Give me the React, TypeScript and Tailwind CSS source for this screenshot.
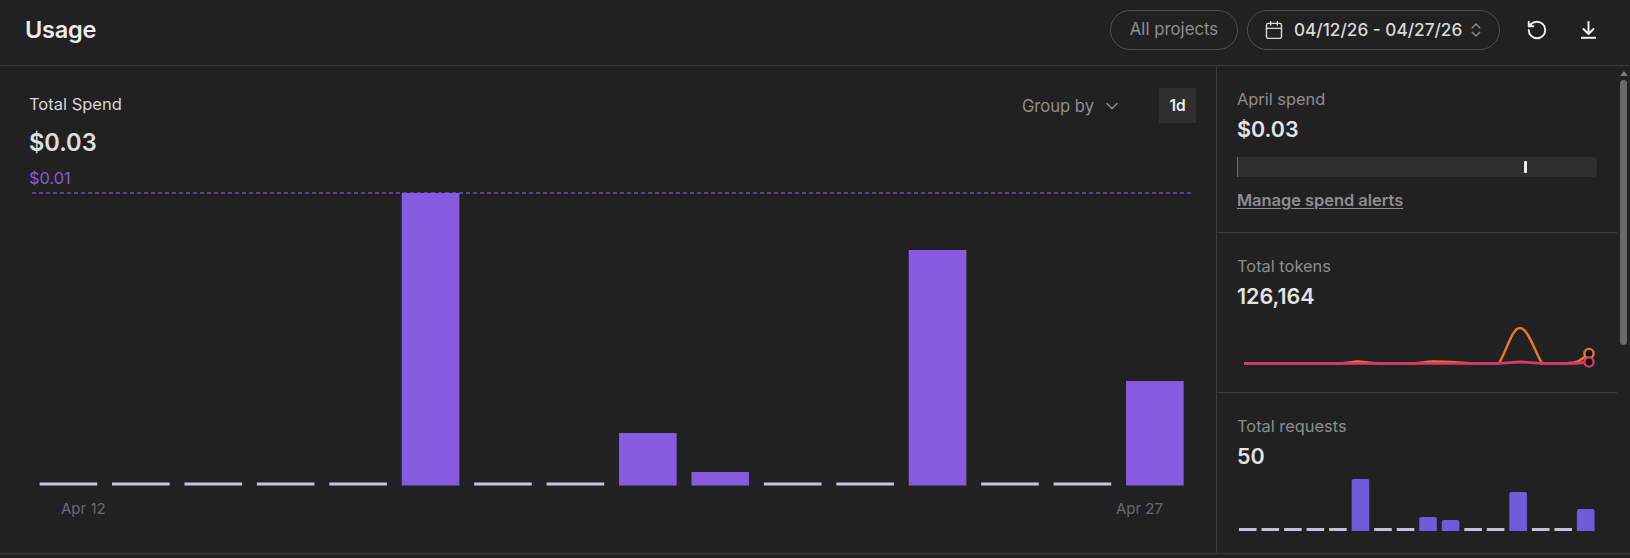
import { Calendar, ChevronDown, ChevronsUpDown, RotateCcw } from "lucide-react";

const mainBars: [number, number][] = [
  [0, 3], [1, 3], [2, 3], [3, 3], [4, 3], [5, 292.5], [6, 3], [7, 3],
  [8, 52.5], [9, 13.5], [10, 3], [11, 3], [12, 235.5], [13, 3], [14, 3], [15, 104.5],
];
const miniBars = [3, 3, 3, 3, 3, 52, 3, 3, 14, 11, 3, 3, 39, 3, 3, 22];

function MainChart() {
  return (
    <svg width="1216" height="302" className="block shrink-0">
      <line x1="32" x2="1192" y1="5" y2="5" stroke="#6c4cc0" strokeWidth="1.5" strokeDasharray="4 3" />
      {mainBars.map(([i, h]) => {
        const x = 39.6 + i * 72.43;
        const zero = h <= 3;
        return (
          <rect
            key={i}
            x={x}
            y={297.5 - h}
            width={57.6}
            height={h}
            fill={zero ? "#c8c5dc" : "#865bdf"}
          />
        );
      })}
    </svg>
  );
}

function Sparkline() {
  return (
    <svg width="380" height="70" className="block shrink-0">
      <g transform="translate(-1217 -316)">
        <path
          d="M1244 363.3 H1340 C1350 363.3 1352 361.6 1358 361.6 C1364 361.6 1368 363.3 1380 363.3 H1410 C1420 363.3 1425 361.6 1433 361.6 C1445 361.6 1455 362 1470 363.3 H1499 C1507 350 1512 328 1520 328 C1528 328 1534 350 1542 363.3 H1567 C1578 363.3 1582 359 1589 353.5"
          fill="none"
          stroke="#e8772a"
          strokeWidth="2.5"
        />
        <path
          d="M1244 363.3 H1498 C1506 363.3 1512 362 1520 362 C1528 362 1534 363.3 1542 363.3 H1567 C1575 363.3 1582 363 1589 362"
          fill="none"
          stroke="#d8386a"
          strokeWidth="2.8"
        />
        <circle cx="1589" cy="353.5" r="4.6" fill="#0b0b0b" stroke="#e8772a" strokeWidth="2.4" />
        <circle cx="1589" cy="362" r="4.6" fill="#0b0b0b" stroke="#d8386a" strokeWidth="2.4" />
      </g>
    </svg>
  );
}

function MiniBars() {
  return (
    <svg width="380" height="56" className="block shrink-0">
      {miniBars.map((h, i) => {
        const x = 22 + i * 22.53;
        return h <= 3 ? (
          <rect key={i} x={x} y={53 - h} width={17.6} height={h} fill="#c5c1dc" />
        ) : (
          <path
            key={i}
            d={`M${x} 53 V${53 - h + 2} Q${x} ${53 - h} ${x + 2} ${53 - h} H${x + 15.6} Q${x + 17.6} ${53 - h} ${x + 17.6} ${53 - h + 2} V53 Z`}
            fill="#705cdb"
          />
        );
      })}
    </svg>
  );
}

export default function App() {
  return (
    <div className="flex h-[558px] w-[1630px] flex-col overflow-hidden bg-[#212121] font-['Inter',sans-serif] text-[#e6e6e6]">
      <header className="flex h-[66px] shrink-0 items-center border-b border-[#3d3d3d] pb-[5px] pl-[25px] pr-[33px]">
        <h1 className="text-[23.5px] font-semibold tracking-[-0.2px] text-[#ececec]">Usage</h1>
        <div className="ml-auto flex items-center">
          <button className="flex h-[40px] w-[128px] items-center justify-center rounded-full border border-[#4f4f4f] text-[16.8px] text-[#8e8e8e]">
            All projects
          </button>
          <button className="ml-[9px] flex h-[40px] w-[253px] items-center rounded-full border border-[#4f4f4f] pl-[16px] text-[17.2px] text-[#d9d9d9]">
            <Calendar size={20} strokeWidth={1.7} className="text-[#d9d9d9]" />
            <span className="ml-[10px] font-medium">04/12/26 - 04/27/26</span>
            <ChevronsUpDown size={18} strokeWidth={1.8} className="ml-[5px] text-[#8f8f8f]" />
          </button>
          <button className="ml-[26px] text-[#f0f0f0]">
            <RotateCcw size={22} strokeWidth={2.1} />
          </button>
          <button className="ml-[32px] text-[#f0f0f0]">
            <svg width="17" height="18" viewBox="0 0 17 18" fill="none" stroke="currentColor" strokeWidth="2" className="block">
              <path d="M8.5 1 V12.5 M3.5 8 L8.5 13 L13.5 8" strokeLinecap="round" strokeLinejoin="round" />
              <path d="M1 16.8 H16" />
            </svg>
          </button>
        </div>
      </header>

      <div className="flex h-[488px] shrink-0 border-b border-[#3d3d3d]">
        <main className="flex w-[1217px] shrink-0 flex-col border-r border-[#3d3d3d]">
          <div className="flex h-[122px] shrink-0 items-start justify-between pl-[29px] pr-[20px]">
            <div className="pt-[28px]">
              <div className="text-[16.5px] leading-[20px] text-[#d6d6d6]">Total Spend</div>
              <div className="mt-[13px] text-[23.6px] font-semibold leading-[32px] text-[#dedede]">$0.03</div>
              <div className="mt-[9px] text-[16.4px] leading-[20px] text-[#865bdf]">$0.01</div>
            </div>
            <div className="mt-[22px] flex items-center">
              <span className="pt-[1px] text-[16.6px] text-[#8e8e8e]">Group by</span>
              <ChevronDown size={20} strokeWidth={1.8} className="ml-[8px] text-[#8e8e8e]" />
              <div className="ml-[37px] flex h-[35px] w-[37px] items-center justify-center bg-[#2f2f2f] text-[15.5px] font-semibold text-[#ececec]">
                1d
              </div>
            </div>
          </div>
          <MainChart />
          <div className="mt-[9px] flex justify-between pl-[61px] pr-[53px] text-[15px] leading-[20px] text-[#6b6a72]">
            <span>Apr 12</span>
            <span>Apr 27</span>
          </div>
        </main>

        <aside className="flex w-[400px] shrink-0 flex-col">
          <section className="h-[167px] shrink-0 border-b border-[#3d3d3d] pl-[20px] pr-[20px] pt-[23px]">
            <div className="text-[16.4px] leading-[20px] text-[#8e8e8e]">April spend</div>
            <div className="mt-[5px] text-[21.5px] font-semibold leading-[30px] text-[#e3e3e3]">$0.03</div>
            <div className="relative mt-[13px] h-[20px] w-[360px] rounded-r-[4px] border-l border-[#16a34a] bg-[#2f2f2f]">
              <div className="absolute left-[286px] top-[4px] h-[12px] w-[3px] rounded-[1px] bg-[#ececec]" />
            </div>
            <a className="mt-[13px] block text-[16.4px] font-semibold leading-[20px] text-[#8e8e8e] underline underline-offset-2">
              Manage spend alerts
            </a>
          </section>
          <section className="flex h-[160px] shrink-0 flex-col border-b border-[#3d3d3d] pt-[23px]">
            <div className="pl-[20px] text-[16.4px] leading-[20px] text-[#8e8e8e]">Total tokens</div>
            <div className="mt-[5px] pl-[20px] text-[21.5px] font-semibold leading-[30px] text-[#e3e3e3]">126,164</div>
            <div className="mt-[5px]">
              <Sparkline />
            </div>
          </section>
          <section className="flex h-[161px] shrink-0 flex-col pt-[23px]">
            <div className="pl-[20px] text-[16.4px] leading-[20px] text-[#8e8e8e]">Total requests</div>
            <div className="mt-[5px] pl-[20px] text-[21.5px] font-semibold leading-[30px] text-[#e3e3e3]">50</div>
            <div className="mt-[7px]">
              <MiniBars />
            </div>
          </section>
        </aside>

        <div className="flex w-[13px] shrink-0 flex-col items-center bg-[#212121] pt-[5px]">
          <div className="h-0 w-0 border-x-[4px] border-b-[5px] border-x-transparent border-b-[#7a7a7a]" />
          <div className="mt-[4px] h-[265px] w-[7px] rounded-full bg-[#6a6a6a]" />
        </div>
      </div>
    </div>
  );
}
